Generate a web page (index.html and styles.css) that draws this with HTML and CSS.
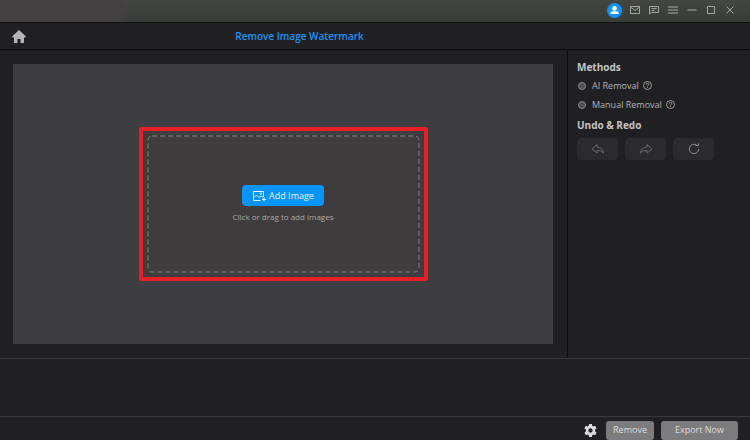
FILE: index.html
```html
<!DOCTYPE html>
<html lang="en">
<head>
    <meta charset="UTF-8">
    <meta name="viewport" content="width=device-width, initial-scale=1.0">
    <title>Remove Image Watermark</title>
    <link rel="stylesheet" href="styles.css">
</head>
<body>
    <div class="app">
        <div class="titlebar">
            <button class="title-btn user" aria-label="Account">
                <svg width="15" height="15" viewBox="0 0 15 15"><circle cx="7.5" cy="7.5" r="7.5" fill="#1194f5"/><circle cx="7.5" cy="5.4" r="2.3" fill="#fff"/><path d="M3.5 11V9.8Q3.5 8.2 5.5 8.2H9.5Q11.5 8.2 11.5 9.8V11Z" fill="#fff"/></svg>
            </button>
            <button class="title-btn" aria-label="Mail">
                <svg width="12" height="10" viewBox="0 0 12 10"><path d="M1.5 1.5h9v7h-9zM1.5 2L6 5.5L10.5 2"/></svg>
            </button>
            <button class="title-btn" aria-label="Feedback">
                <svg width="12" height="10" viewBox="0 0 12 10"><path d="M1.5 9V1.5h9v6H3.5zM3.5 3.5h5M3.5 5.5h3"/></svg>
            </button>
            <button class="title-btn" aria-label="Menu">
                <svg width="12" height="10" viewBox="0 0 12 10"><path d="M1 2h10M1 5h10M1 8h10"/></svg>
            </button>
            <button class="title-btn" aria-label="Minimize">
                <svg width="12" height="10" viewBox="0 0 12 10"><path d="M1.5 5h9"/></svg>
            </button>
            <button class="title-btn" aria-label="Maximize">
                <svg width="12" height="10" viewBox="0 0 12 10"><path d="M2.5 1.5h7v7h-7z"/></svg>
            </button>
            <button class="title-btn" aria-label="Close">
                <svg width="12" height="10" viewBox="0 0 12 10"><path d="M2.5 1.5l7 7M9.5 1.5l-7 7"/></svg>
            </button>
        </div>

        <div class="header">
            <div class="header-main">
                <a class="home" href="#" aria-label="Home">
                    <svg width="14" height="13" viewBox="0 0 14 13"><path d="M7 0L0 6.5L.8 7.5H2V13H5.5V9H8.5V13H12V7.5H13.2L14 6.5Z" fill="#b4b4b6"/></svg>
                </a>
                <h1>Remove Image Watermark</h1>
            </div>
        </div>

        <div class="main">
            <div class="workspace">
                <div class="canvas">
                    <div class="highlight">
                        <div class="dropzone">
                            <svg class="dashes" width="100%" height="100%"><rect x="1" y="1" rx="4"/></svg>
                            <button class="add-btn">
                                <svg width="14" height="12" viewBox="0 0 14 12"><path d="M8.5 10.5H1.5V1.5H11.5V7M1.5 8L4.5 5L7 7.5L8.5 6L11 7M10 9.5h4M12 7.5v4"/><circle cx="8.8" cy="3.7" r=".8"/></svg>
                                Add Image
                            </button>
                            <p class="hint">Click or drag to add images</p>
                        </div>
                    </div>
                </div>
            </div>

            <div class="sidebar">
                <h2>Methods</h2>
                <div class="methods">
                    <label class="method">
                        <input type="radio" name="method">
                        AI Removal
                        <svg class="help" width="9" height="9" viewBox="0 0 9 9"><circle cx="4.5" cy="4.5" r="4"/><path d="M3.2 3.6Q3.2 2.3 4.5 2.3T5.8 3.5Q5.8 4.2 4.5 4.8V5.4M4.5 6.2V7"/></svg>
                    </label>
                    <label class="method">
                        <input type="radio" name="method">
                        Manual Removal
                        <svg class="help" width="9" height="9" viewBox="0 0 9 9"><circle cx="4.5" cy="4.5" r="4"/><path d="M3.2 3.6Q3.2 2.3 4.5 2.3T5.8 3.5Q5.8 4.2 4.5 4.8V5.4M4.5 6.2V7"/></svg>
                    </label>
                </div>
                <h2>Undo &amp; Redo</h2>
                <div class="history">
                    <button aria-label="Undo">
                        <svg width="14" height="12" viewBox="0 0 14 12"><path d="M6 1.5L1 6L6 10V7.5Q10.5 7 12.5 10Q12 4.5 6 4Z"/></svg>
                    </button>
                    <button aria-label="Redo">
                        <svg width="14" height="12" viewBox="0 0 14 12"><path d="M8 1.5L13 6L8 10V7.5Q3.5 7 1.5 10Q2 4.5 8 4Z"/></svg>
                    </button>
                    <button aria-label="Reset">
                        <svg class="reset" width="14" height="12" viewBox="0 0 14 12"><path d="M9.5 2A4.7 4.7 0 1 0 11.7 6M8.5 2.5H11.5V.5"/></svg>
                    </button>
                </div>
            </div>
        </div>

        <div class="filmstrip"></div>

        <div class="footer">
            <button class="settings" aria-label="Settings">
                <svg width="13" height="13" viewBox="0 0 14 14"><path fill-rule="evenodd" fill="#dcdcdc" d="M5.5 0h3l.4 1.9 1.2.7 1.9-.6 1.5 2.6L12 6v2l1.5 1.4L12 12l-1.9-.6-1.2.7L8.500 14h-3l-.4-1.9-1.2-.7L2 12 .5 9.4 2 8V6L.5 4.6 2 2l1.9.6 1.2-.7zM7 4.7a2.3 2.3 0 1 0 0 4.6a2.3 2.3 0 1 0 0-4.6z"/></svg>
            </button>
            <button class="action remove">Remove</button>
            <button class="action export">Export Now</button>
        </div>
    </div>
</body>
</html>
```
FILE: styles.css
```css
* {
    box-sizing: border-box;
}
body {
    margin: 0;
    background: #201f22;
    color: #b4b4b6;
    font-family: 'Open Sans', 'Noto Sans', sans-serif;
    font-size: 9px;
    line-height: 14px;
}
button {
    display: flex;
    align-items: center;
    justify-content: center;
    padding: 0;
    border: 0;
    background: none;
    color: inherit;
    font: inherit;
}
svg {
    display: block;
    flex-shrink: 0;
    fill: none;
}
h1, h2, p {
    margin: 0;
}
h1, h2 {
    font-size: 10px;
    font-weight: bold;
}
.app {
    display: flex;
    flex-direction: column;
    min-height: 100vh;
}

/* Window bar */
.titlebar {
    display: flex;
    align-items: center;
    justify-content: flex-end;
    gap: 7px;
    height: 23px;
    padding: 0 14px 2px 0;
    background: linear-gradient(90deg, #434042 0, #434042 120px, transparent 130px), linear-gradient(#444644, #393b39);
    border-bottom: 1px solid #111;
}
.title-btn svg {
    stroke: #a5a5a5;
}
.title-btn.user svg {
    stroke: none;
}

/* Page header */
.header {
    display: grid;
    grid-template-columns: 1fr 183px;
    height: 27px;
    background: #202022;
    border-bottom: 1px solid #0c0c0c;
}
.header-main {
    display: flex;
    align-items: center;
    padding-left: 12px;
}
.header h1 {
    flex: 1;
    padding-left: 6px;
    color: #1b93f0;
    font-weight: 600;
    text-align: center;
}

/* Workspace and side panel */
.main {
    display: grid;
    grid-template-columns: 1fr 183px;
    flex: 1;
}
.workspace {
    display: flex;
    padding: 14px 14px 14px 13px;
}
.canvas {
    display: flex;
    align-items: center;
    justify-content: center;
    flex: 1;
    background: #3e3d40;
}
.highlight {
    width: 289px;
    padding: 4px;
    border: 4px solid #e81e27;
    border-radius: 2px;
    background: #3e3c3c;
}
.dropzone {
    position: relative;
    display: flex;
    flex-direction: column;
    align-items: center;
    gap: 4px;
    padding: 50px 0 49px;
}
.dashes {
    position: absolute;
    inset: 0;
}
.dashes rect {
    width: calc(100% - 2px);
    height: calc(100% - 2px);
    stroke: #858585;
    stroke-dasharray: 5 3;
}
.add-btn {
    position: relative;
    gap: 3px;
    width: 82px;
    height: 21px;
    border-radius: 4px;
    background: #0794fb;
    color: #e8f4ff;
}
.add-btn svg {
    stroke: #e8f4ff;
}
.hint {
    color: #a9a9a9;
    font-size: 8px;
}
.sidebar {
    padding: 10px 9px;
    border-left: 1px solid #0c0c0c;
}
.sidebar h2 {
    color: #c4c4c6;
}
.methods {
    margin: 2px 0 4px;
}
.method {
    display: flex;
    align-items: center;
    gap: 4px;
    height: 19px;
}
.method input {
    appearance: none;
    width: 8px;
    height: 8px;
    margin: 0 2px 0 1px;
    border: 1px solid #858587;
    border-radius: 50%;
    background: #505052;
}
.help {
    stroke: #9a9a9c;
}
.history {
    display: flex;
    gap: 7px;
    margin-top: 6px;
}
.history button {
    width: 41px;
    height: 22px;
    border-radius: 4px;
    background: #2b2a2d;
}
.history svg {
    stroke: #6a6a6c;
}
.history .reset {
    stroke: #909092;
}

/* Bottom area */
.filmstrip {
    height: 58px;
    border-top: 1px solid #3a3a3c;
}
.footer {
    display: flex;
    align-items: center;
    justify-content: flex-end;
    gap: 7px;
    height: 24px;
    padding: 3px 12px 0 0;
    border-top: 1px solid #3a3a3c;
}
.settings {
    margin-right: 2px;
}
.action {
    height: 19px;
    border-radius: 3px;
    background: #7c7b7d;
    color: #dededf;
}
.remove {
    width: 48px;
}
.export {
    width: 77px;
}
```
